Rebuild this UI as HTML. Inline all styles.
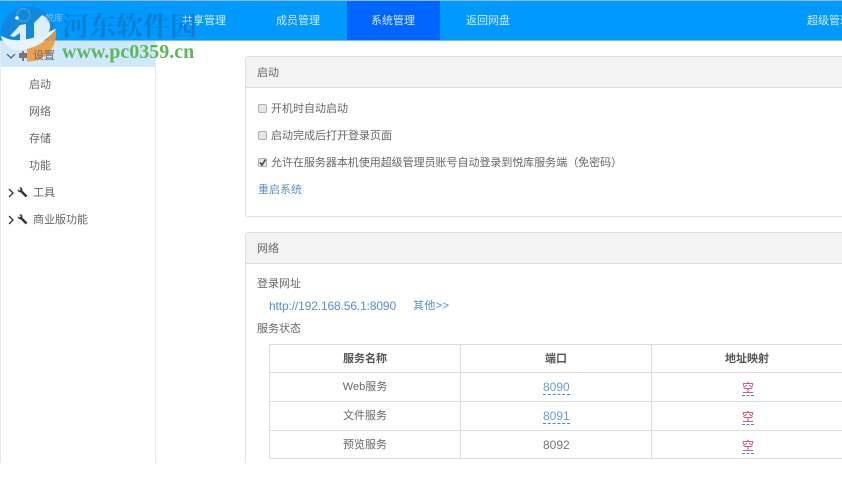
<!DOCTYPE html>
<html><head><meta charset="utf-8">
<style>
html,body{margin:0;padding:0;background:#fff;}
body{width:842px;height:480px;overflow:hidden;position:relative;font-family:"Liberation Sans","Noto Sans CJK SC",sans-serif;font-size:11px;color:#666;}
#w{position:absolute;left:0;top:0;width:842px;height:480px;filter:blur(.35px);}
.a{position:absolute;white-space:nowrap;line-height:14px;}
.n{color:#d4ebff;top:14px;}
.s{left:29px;}
.l{color:#5b8fc0;}
.b{position:absolute;}
.c{text-align:center;}
.d{border-bottom:1px dashed #3f8fc0;color:#6f9ccc;}
.k{position:absolute;width:7px;height:7px;border:1px solid #b0b0b0;border-radius:2px;background:#e6e6e6;left:258px;}
.h{font-weight:bold;color:#555;}
.e{color:#c8467c;border-bottom:1px dashed #3f8fc0;line-height:13px;font-size:12px;}
</style></head>
<body><div id="w">
<!-- nav -->
<div class="b" style="left:0;top:0;width:842px;height:1px;background:#8fb8d8"></div>
<div class="b" style="left:0;top:1px;width:842px;height:39px;background:#0099ff"></div>
<div class="b" style="left:0;top:40px;width:842px;height:1px;background:#66c0ff"></div>
<div class="b" style="left:347px;top:1px;width:93px;height:39px;background:#0066ff"></div>
<div class="a n" style="left:182px">共享管理</div>
<div class="a n" style="left:276px">成员管理</div>
<div class="a n" style="left:371px">系统管理</div>
<div class="a n" style="left:466px">返回网盘</div>
<div class="a n" style="left:807px">超级管理员</div>

<!-- sidebar -->
<div class="b" style="left:0;top:41px;width:1px;height:422px;background:#e8e8e8"></div>
<div class="b" style="left:155px;top:41px;width:1px;height:422px;background:#eaeaea"></div>
<div class="b" style="left:1px;top:41px;width:154px;height:26px;background:#cfe8fb"></div>

<!-- logo sits under the sidebar row label -->
<svg class="b" style="left:0;top:0" width="70" height="70" viewBox="0 0 70 70">
<defs><clipPath id="cc"><circle cx="28.500" cy="34" r="27.500"/></clipPath></defs>
<g clip-path="url(#cc)">
<path d="M0 35C12 43 35 42 57 28L57 0 0 0z" fill="#1288dc"/>
<path d="M27 49C38 47 48 40 57 28L60 66 27 66z" fill="#ec9a3c" opacity=".9"/>
<path d="M0 35C10 42 25 44 57 28 46 42 30 50 18 50 10 50 4 44 0 35z" fill="#e8f4fc"/>
</g>
<circle cx="23.500" cy="15" r="6.500" fill="none" stroke="#4aa8e8" stroke-width="1"/>
<path d="M10 36L20 25 26 24 26 40 20 41 20 33 14 37z" fill="#dceefa"/>
<path d="M34 23L42 15C52 20 52 30 46 35L34 40z" fill="#dceefa"/>
<circle cx="17" cy="18" r="1.800" fill="#e8f4fc"/>
</svg>

<svg class="b" style="left:6px;top:52px" width="10" height="8" viewBox="0 0 10 8"><path d="M1 2l4 4 4-4" fill="none" stroke="#555" stroke-width="1.200"/></svg>
<svg class="b" style="left:18px;top:51px" width="10" height="10" viewBox="0 0 10 10"><path d="M4 0h2v2h3v5H6v3H4V7H1V2h3z" fill="#777"/></svg>
<div class="a" style="left:33px;top:49px">设置</div>
<div class="a s" style="top:78px">启动</div>
<div class="a s" style="top:105px">网络</div>
<div class="a s" style="top:132px">存储</div>
<div class="a s" style="top:159px">功能</div>
<svg class="b" style="left:8px;top:188px" width="7" height="10" viewBox="0 0 7 10"><path d="M1 1l4 4-4 4" fill="none" stroke="#333" stroke-width="1.300"/></svg>
<svg class="b" style="left:17px;top:187px" width="11" height="11" viewBox="0 0 11 11"><path d="M3.500 3.500L9.500 9.500" stroke="#333" stroke-width="2.400" fill="none"/><path d="M.8 2.200L2.600 3.600 3.800 2.400 2.400.6C4 0 5.600.8 5.400 3L4 5.200C2 5.600.4 4 .8 2.200z" fill="#333"/></svg>
<div class="a" style="left:33px;top:186px">工具</div>
<svg class="b" style="left:8px;top:215px" width="7" height="10" viewBox="0 0 7 10"><path d="M1 1l4 4-4 4" fill="none" stroke="#333" stroke-width="1.300"/></svg>
<svg class="b" style="left:17px;top:214px" width="11" height="11" viewBox="0 0 11 11"><path d="M3.500 3.500L9.500 9.500" stroke="#333" stroke-width="2.400" fill="none"/><path d="M.8 2.200L2.600 3.600 3.800 2.400 2.400.6C4 0 5.600.8 5.400 3L4 5.200C2 5.600.4 4 .8 2.200z" fill="#333"/></svg>
<div class="a" style="left:33px;top:213px">商业版功能</div>

<!-- panel 1 -->
<div class="b" style="left:245px;top:56px;width:600px;height:161px;border:1px solid #e2e2e2;border-radius:3px;box-sizing:border-box"></div>
<div class="b" style="left:246px;top:57px;width:596px;height:30px;background:#f3f3f3;border-bottom:1px solid #ddd"></div>
<div class="a" style="left:257px;top:66px">启动</div>
<div class="k" style="top:104px"></div>
<div class="a" style="left:271px;top:102px">开机时自动启动</div>
<div class="k" style="top:131px"></div>
<div class="a" style="left:271px;top:129px">启动完成后打开登录页面</div>
<div class="k" style="top:158px"></div>
<svg class="b" style="left:258px;top:158px" width="10" height="10" viewBox="0 0 10 10"><path d="M2 4.500l2 2.500L7.500 1.500" fill="none" stroke="#444" stroke-width="1.600"/></svg>
<div class="a" style="left:271px;top:156px;letter-spacing:-.03px">允许在服务器本机使用超级管理员账号自动登录到悦库服务端（免密码）</div>
<div class="a l" style="left:258px;top:183px">重启系统</div>

<!-- panel 2 -->
<div class="b" style="left:245px;top:232px;width:600px;height:231px;border:1px solid #e2e2e2;border-bottom:0;border-radius:3px 3px 0 0;box-sizing:border-box"></div>
<div class="b" style="left:246px;top:233px;width:596px;height:30px;background:#f3f3f3;border-bottom:1px solid #ddd"></div>
<div class="a" style="left:257px;top:242px">网络</div>
<div class="a" style="left:257px;top:277px">登录网址</div>
<div class="a l" style="left:269px;top:299px;font-size:12px;letter-spacing:-.13px">http://192.168.56.1:8090</div>
<div class="a l" style="left:413px;top:299px;letter-spacing:.4px">其他&gt;&gt;</div>
<div class="a" style="left:257px;top:322px">服务状态</div>

<!-- table -->
<div class="b" style="left:269px;top:344px;width:574px;height:1px;background:#ddd"></div>
<div class="b" style="left:269px;top:372px;width:574px;height:1px;background:#ddd"></div>
<div class="b" style="left:269px;top:401px;width:574px;height:1px;background:#ddd"></div>
<div class="b" style="left:269px;top:430px;width:574px;height:1px;background:#ddd"></div>
<div class="b" style="left:269px;top:458px;width:574px;height:1px;background:#ddd"></div>
<div class="b" style="left:269px;top:344px;width:1px;height:115px;background:#ddd"></div>
<div class="b" style="left:460px;top:344px;width:1px;height:115px;background:#ddd"></div>
<div class="b" style="left:651px;top:344px;width:1px;height:115px;background:#ddd"></div>

<div class="a c h" style="left:270px;width:190px;top:352px">服务名称</div>
<div class="a c h" style="left:461px;width:190px;top:352px">端口</div>
<div class="a c h" style="left:652px;width:190px;top:352px">地址映射</div>

<div class="a c" style="left:270px;width:190px;top:380px">Web服务</div>
<div class="a c" style="left:270px;width:190px;top:409px">文件服务</div>
<div class="a c" style="left:270px;width:190px;top:438px">预览服务</div>

<div class="a d" style="left:543px;top:380px;font-size:12px">8090</div>
<div class="a d" style="left:543px;top:409px;font-size:12px">8091</div>
<div class="a" style="left:543px;top:438px;font-size:12px;color:#777">8092</div>

<div class="a e" style="left:742px;top:382px">空</div>
<div class="a e" style="left:742px;top:411px">空</div>
<div class="a e" style="left:742px;top:440px">空</div>

<!-- watermark text -->
<div class="a" style="left:45px;top:11px;font-size:9px;color:#7cc0f2">悦库</div>
<div class="a" style="left:62px;top:12px;font:bold 27px/30px 'Liberation Serif','Noto Serif CJK SC',serif;color:#0f6fb8;opacity:.6">河东软件园</div>
<div class="a" style="left:62px;top:42px;font:bold 20px/20px 'Liberation Serif',serif;color:#5cb85c">www.pc0359.cn</div>
</div></body></html>
